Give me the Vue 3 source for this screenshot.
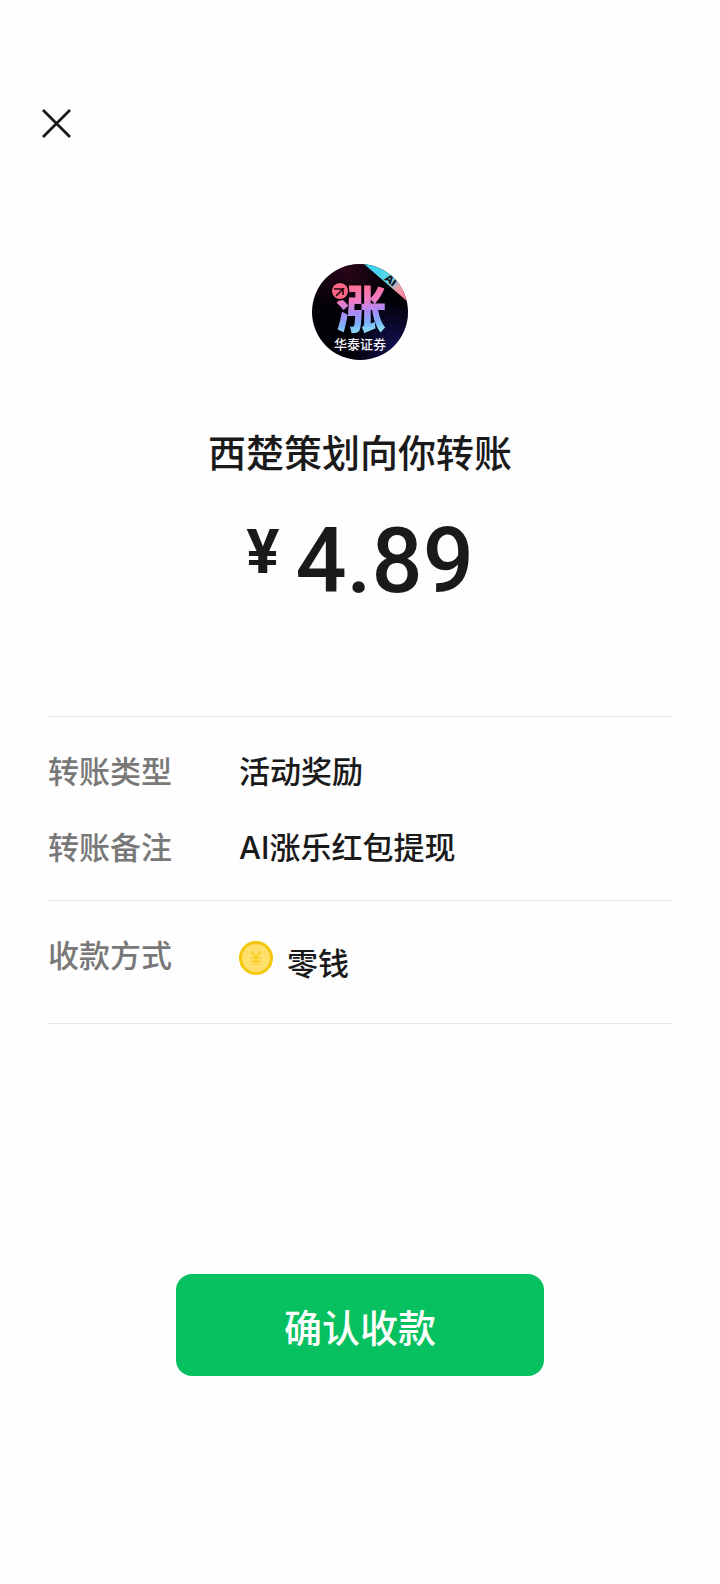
<script setup>
const details = [
  { label: '转账类型', value: '活动奖励' },
  { label: '转账备注', value: 'AI涨乐红包提现' },
]
</script>

<template>
  <main class="page">
    <div class="status"></div>
    <header class="bar">
      <button class="close" type="button" aria-label="关闭">
        <svg width="32" height="32" viewBox="0 0 32 32" fill="none" stroke="#1a1a1a" stroke-width="2.8">
          <path d="M3 2 30 29M30 2 3 29" />
        </svg>
      </button>
    </header>

    <section class="summary">
      <svg class="avatar" width="96" height="96" viewBox="0 0 96 96" role="img" aria-label="华泰证券">
        <defs>
          <clipPath id="disc"><circle cx="48" cy="48" r="48" /></clipPath>
          <radialGradient id="blue" cx="0.85" cy="0.85" r="0.45">
            <stop offset="0" stop-color="#12104e" />
            <stop offset="1" stop-color="#12104e" stop-opacity="0" />
          </radialGradient>
          <radialGradient id="wine" cx="0.35" cy="0.05" r="0.45">
            <stop offset="0" stop-color="#2a0519" />
            <stop offset="1" stop-color="#2a0519" stop-opacity="0" />
          </radialGradient>
          <linearGradient id="glyph" gradientUnits="userSpaceOnUse" x1="44" y1="22" x2="50" y2="70">
            <stop offset="0" stop-color="#ff6f92" />
            <stop offset="0.3" stop-color="#f07cc4" />
            <stop offset="0.55" stop-color="#a98af8" />
            <stop offset="0.8" stop-color="#7cb4fa" />
            <stop offset="1" stop-color="#8ceaf0" />
          </linearGradient>
          <linearGradient id="ribbon" gradientUnits="userSpaceOnUse" x1="56" y1="0" x2="96" y2="36">
            <stop offset="0" stop-color="#35d3f2" />
            <stop offset="0.5" stop-color="#5fd3e8" />
            <stop offset="0.72" stop-color="#f0a0a8" />
            <stop offset="1" stop-color="#ff6f98" />
          </linearGradient>
        </defs>
        <g clip-path="url(#disc)">
          <rect width="96" height="96" fill="#030108" />
          <rect width="96" height="96" fill="url(#blue)" />
          <rect width="96" height="96" fill="url(#wine)" />
          <path d="M52 0H96V38Z" fill="url(#ribbon)" />
          <text class="tag" x="79" y="20" transform="rotate(38 79 16)" text-anchor="middle">AI</text>
        </g>
        <text class="rise" x="49" y="64" text-anchor="middle" fill="url(#glyph)">涨</text>
        <circle cx="28" cy="27" r="9.5" fill="#030108" />
        <circle cx="28" cy="27" r="8" fill="#ff6584" />
        <path d="M22 25H31L24 32M31 24V31" fill="none" stroke="#24060f" stroke-width="1.6" />
        <text class="brand" x="48" y="85" text-anchor="middle">华泰证券</text>
      </svg>
      <h1 class="title">西楚策划向你转账</h1>
      <p class="amount"><span class="yen">¥</span><span class="digits">4.89</span></p>
    </section>

    <section class="details">
      <dl class="group">
        <div v-for="item in details" :key="item.label" class="row">
          <dt>{{ item.label }}</dt>
          <dd>{{ item.value }}</dd>
        </div>
      </dl>
      <dl class="group method">
        <div class="row">
          <dt>收款方式</dt>
          <dd class="wallet">
            <svg width="34" height="34" viewBox="0 0 34 34" aria-hidden="true">
              <circle cx="17" cy="17" r="15.5" fill="#ffdf6b" stroke="#f5c70c" stroke-width="3" />
              <path d="M12.5 10.5 17 16.5 21.5 10.5M17 16.5V24M12 17H22M12 20.5H22" fill="none" stroke="#f8cb18" stroke-width="1.6" />
            </svg>
            <span>零钱</span>
          </dd>
        </div>
      </dl>
    </section>

    <button class="confirm" type="button">确认收款</button>
  </main>
</template>

<style>
body {
  margin: 0;
  background: #fefefe;
}
</style>

<style scoped>
.page {
  display: flex;
  flex-direction: column;
  min-height: 100vh;
  font-family: "Noto Sans CJK SC", sans-serif;
  color: #1a1a1a;
  background: #fefefe;
}
.status {
  height: 80px;
  background: #fdfdfd;
}
.bar {
  display: flex;
  padding: 28px 40px;
}
button {
  border: 0;
  padding: 0;
  font-family: inherit;
  cursor: pointer;
}
.close {
  display: flex;
  background: none;
}
.summary {
  display: flex;
  flex-direction: column;
  align-items: center;
  padding-top: 96px;
}
.rise {
  font-size: 50px;
  font-weight: 900;
}
.brand {
  font-size: 13px;
  font-weight: 500;
  fill: #f4f4f8;
}
.tag {
  font-family: Roboto, sans-serif;
  font-size: 12px;
  font-weight: 900;
  fill: #101018;
}
.title {
  margin: 63px 0 0;
  font-size: 38px;
  line-height: 56px;
  font-weight: 500;
}
.amount {
  display: flex;
  align-items: flex-start;
  gap: 16px;
  margin: 27px 0 0;
  font-family: Roboto, sans-serif;
}
.yen {
  font-size: 62px;
  line-height: 92px;
  font-weight: 700;
}
.digits {
  font-size: 90px;
  line-height: 112px;
  font-weight: 500;
}
.details {
  margin: 98px 48px 0;
  border-bottom: 1px solid #e5e5e5;
}
.group {
  display: flex;
  flex-direction: column;
  gap: 28px;
  margin: 0;
  padding: 31px 0 28px;
  border-top: 1px solid #e5e5e5;
  font-family: Inter, "Noto Sans CJK SC", sans-serif;
  font-size: 31px;
  line-height: 48px;
  font-weight: 500;
}
.method {
  padding-bottom: 36px;
}
.row {
  display: flex;
  align-items: flex-start;
}
dt {
  width: 191px;
  color: #787878;
}
dd {
  margin: 0;
}
.wallet {
  display: flex;
  align-items: flex-start;
  gap: 14px;
  padding-top: 9px;
}
.wallet span {
  line-height: 46px;
}
.confirm {
  align-self: center;
  width: 51%;
  height: 102px;
  margin: 250px 0 80px;
  border-radius: 16px;
  background: #07c160;
  color: #fff;
  font-size: 38px;
  font-weight: 500;
}
</style>
